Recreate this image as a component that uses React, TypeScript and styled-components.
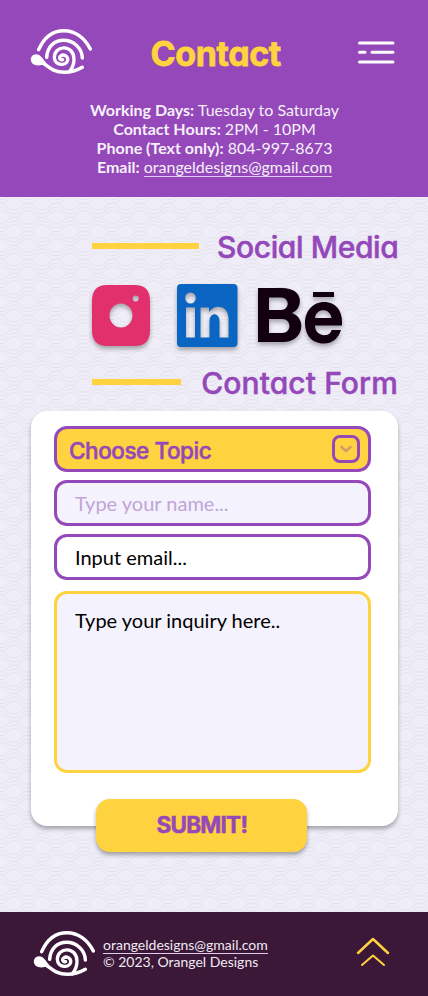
import React from "react";
import styled, { createGlobalStyle } from "styled-components";

const purple = "#9448b9";
const yellow = "#ffd23f";

const wave = (y: number, x: number) =>
  `<path d='M${x - 28} ${y} c4 0 5 -1 8 -4 s9 -4 12 0 s4 4 8 4 c4 0 5 -1 8 -4 s9 -4 12 0 s4 4 8 4 c4 0 5 -1 8 -4 s9 -4 12 0 s4 4 8 4'/>`;
const tile = `<svg xmlns='http://www.w3.org/2000/svg' width='28' height='28' viewBox='0 0 28 28'><g fill='none' stroke='#e4e1ec' stroke-width='1'>${[
  0, 3.7, 7.4, 14, 17.7, 21.4, 28, 31.7,
]
  .map((y, i) => wave(y, i % 6 > 2 ? -14 : 0))
  .join("")}</g></svg>`;
const texture = `url("data:image/svg+xml,${encodeURIComponent(tile)}")`;

const Global = createGlobalStyle`
  * { box-sizing: border-box; }
  body { margin: 0; font-family: Lato, sans-serif; }
`;

const Page = styled.div`
  width: 428px;
  height: 996px;
  display: flex;
  flex-direction: column;
  background: #efedf7 ${texture};
`;

const Header = styled.header`
  height: 197px;
  background: ${purple};
  color: #f6f0fb;
`;

const TopBar = styled.div`
  height: 100px;
  padding: 28px 33px 0 30px;
  display: flex;
  justify-content: space-between;
  align-items: flex-start;
`;

const Rounded = styled.span<{ $size: number; $spacing: number; $weight?: number; $stroke?: number }>`
  font-family: Inter, sans-serif;
  font-feature-settings: "cv11" 1, "ss03" 1;
  font-size: ${(p) => p.$size}px;
  line-height: 1.2;
  font-weight: ${(p) => p.$weight ?? 500};
  letter-spacing: ${(p) => p.$spacing}px;
  margin-right: ${(p) => p.$spacing}px;
  -webkit-text-stroke: ${(p) => p.$stroke ?? 0.5}px currentColor;
  stroke-linejoin: round;
  white-space: nowrap;
`;

const Title = styled.h1`
  margin: 6px 0 0 -19px;
  color: ${yellow};
  display: flex;
`;

const MenuButton = styled.button`
  margin: 12px 0 0;
  padding: 0;
  border: 0;
  background: none;
  display: flex;
`;

const Details = styled.div`
  text-align: center;
  font-size: 16px;
  line-height: 19px;
  padding-left: 1px;
`;

const MailLink = styled.a<{ $tight?: boolean }>`
  display: inline-block;
  height: ${(p) => (p.$tight ? 18 : 20)}px;
  color: inherit;
  text-decoration: none;
  border-bottom: 1px solid #e0cbeb;
`;

const Main = styled.main`
  flex: 1;
  padding: 30px 30px 0 31px;
`;

const SectionHead = styled.div`
  height: 40px;
  padding-left: 61px;
  display: flex;
  align-items: center;
  justify-content: space-between;
  color: ${purple};
`;

const Rule = styled.div<{ $width: number }>`
  width: ${(p) => p.$width}px;
  height: 6px;
  margin-bottom: 2px;
  background: ${yellow};
`;

const Socials = styled.div`
  height: 96px;
  padding: 16px 0 0 61px;
  display: flex;
  align-items: flex-start;
  svg { filter: drop-shadow(0 3px 2px rgba(0, 0, 0, 0.3)); overflow: visible; }
`;

const SocialLink = styled.a<{ $left?: number; $top?: number }>`
  display: flex;
  margin: ${(p) => p.$top ?? 0}px 0 0 ${(p) => p.$left ?? 0}px;
`;

const Card = styled.form`
  width: 367px;
  height: 415px;
  margin-top: 8px;
  padding: 15px 27px 0 23px;
  border-radius: 16px;
  background: #fff;
  box-shadow: 0 3px 4px rgba(0, 0, 0, 0.3);
  display: flex;
  flex-direction: column;
`;

const Select = styled.div`
  height: 46px;
  flex-shrink: 0;
  padding: 2px 8px 0 12px;
  border: 3px solid ${purple};
  border-radius: 13px;
  background: ${yellow};
  color: ${purple};
  display: flex;
  align-items: center;
  justify-content: space-between;
`;

const Chevron = styled.div`
  width: 28px;
  height: 28px;
  margin-top: -3px;
  border: 3px solid ${purple};
  border-radius: 8px;
  display: grid;
  place-items: center;
`;

const Field = styled.div<{ $muted?: boolean }>`
  height: 46px;
  flex-shrink: 0;
  margin-top: 8px;
  padding: 0 18px;
  border: 3px solid ${purple};
  border-radius: 13px;
  background: ${(p) => (p.$muted ? "#f4f2fd" : "#fff")};
  color: ${(p) => (p.$muted ? "#c2a4d6" : "#000")};
  font-size: 20px;
  line-height: 40px;
`;

const Inquiry = styled.div`
  height: 182px;
  flex-shrink: 0;
  margin-top: 11px;
  padding: 14px 18px;
  border: 3px solid ${yellow};
  border-radius: 13px;
  background: #f4f2fd;
  color: #000;
  font-size: 20px;
  line-height: 24px;
`;

const Submit = styled.button`
  width: 211px;
  height: 53px;
  flex-shrink: 0;
  margin: 26px 0 0 42px;
  padding: 0 0 3px;
  border: 0;
  border-radius: 14px;
  background: ${yellow};
  color: ${purple};
  box-shadow: 0 3px 4px rgba(0, 0, 0, 0.32);
`;

const Footer = styled.footer`
  height: 84px;
  padding: 18px 38px 0 33px;
  background: #3b1738;
  color: #f0eaf2;
  display: flex;
  align-items: flex-start;
`;

const Copyright = styled.div`
  flex: 1;
  margin: 6px 0 0 7px;
  font-size: 14px;
  line-height: 17px;
  display: flex;
  flex-direction: column;
  align-items: flex-start;
`;

const CopyLine = styled.span`
  margin-top: -1px;
`;

const TopLink = styled.a`
  display: flex;
  margin-top: 6px;
`;

function Snail() {
  return (
    <svg width="63" height="47" viewBox="30 24 189 141" fill="none" stroke="#fff" strokeWidth="10.5" strokeLinecap="round">
      <path d="M56 89C72 52 99 32 132 32S194 53 211 87" />
      <path d="M80 112C82 80 103 61 131 61S186 83 187 114" />
      <path d="M128 119C120 121 116 113 122 108C130 101 145 108 143 121C140 139 103 138 103 112C103 74 162 72 162 118C162 133 157 145 148 155" strokeWidth="10" />
      <path d="M58 123C80 131 92 157 133 157C160 157 175 149 187 142" />
      <path d="M48 103C62 103 68 117 80 131C70 133 62 137 50 136C26 133 28 104 48 103Z" fill="#fff" stroke="none" />
    </svg>
  );
}

export default function App() {
  return (
    <Page>
      <Global />
      <Header>
        <TopBar>
          <Snail />
          <Title>
            <Rounded $size={34} $spacing={-0.4} $weight={700} $stroke={0.8}>Contact</Rounded>
          </Title>
          <MenuButton aria-label="Menu">
            <svg width="38" height="25" fill="none" stroke="#fff" strokeWidth="3" strokeLinecap="round">
              <path d="M2.5 3H36M2.5 12.3H8M15 12.3H36M2.5 22H36" />
            </svg>
          </MenuButton>
        </TopBar>
        <Details>
          <div><b>Working Days:</b> Tuesday to Saturday</div>
          <div><b>Contact Hours:</b> 2PM - 10PM</div>
          <div><b>Phone (Text only):</b> 804-997-8673</div>
          <div><b>Email:</b> <MailLink>orangeldesigns@gmail.com</MailLink></div>
        </Details>
      </Header>
      <Main>
        <SectionHead>
          <Rule $width={107} />
          <Rounded $size={30} $spacing={-0.4}>Social Media</Rounded>
        </SectionHead>
        <Socials>
          <SocialLink $top={2} aria-label="Instagram">
            <svg width="58" height="61">
              <path fill="#e1306c" fillRule="evenodd" d="M15 0H43Q58 0 58 16V45Q58 61 43 61H15Q0 61 0 45V16Q0 0 15 0ZM29 18.5a11.5 12 0 1 0 0 24a11.5 12 0 1 0 0-24ZM43.7 10.5a3 3 0 1 0 0 6a3 3 0 1 0 0-6Z" />
            </svg>
          </SocialLink>
          <SocialLink $left={27} $top={1} aria-label="LinkedIn">
            <svg width="61" height="63">
              <path fill="#0a66c2" fillRule="evenodd" d="M4 0H56.5Q60.5 0 60.5 4V59Q60.5 63 56.5 63H4Q0 63 0 59V4Q0 0 4 0ZM13.5 8.5a5.3 5.5 0 1 0 0 11a5.3 5.5 0 1 0 0-11ZM9 23.5H18V53.5H9ZM23.5 23.5H32V28C38 19.500 51.500 21 51.500 35V53.500H42.500V37C42.500 28 32.500 28 32.500 37V53.500H23.500Z" />
            </svg>
          </SocialLink>
          <SocialLink $left={20} $top={5} aria-label="Behance">
            <svg width="86" height="56">
              <path fill="#13000f" fillRule="evenodd" d="M0 0H24C47 0 45 21 34 25C49 30 46 54 25 54H0ZM11 9.500V22H23C32 22 32 9.500 23 9.500ZM11 31V45H24C34 45 34 31 24 31ZM55 4H76V9H55ZM84 37.500H57C57 49 72 50 73.500 42H83C80 51 74 55.500 66 55.500C53 55.500 47 46 47 35C47 23 55 14 66 14C79 14 85 24 84 37.500ZM57 30H73.500C72 19.500 58 20 57 30Z" />
            </svg>
          </SocialLink>
        </Socials>
        <SectionHead>
          <Rule $width={89} />
          <Rounded $size={30} $spacing={0.1}>Contact Form</Rounded>
        </SectionHead>
        <Card>
          <Select>
            <Rounded $size={22.5} $spacing={-0.45}>Choose Topic</Rounded>
            <Chevron>
              <svg width="14" height="10" fill="none" stroke="#d49c67" strokeWidth="2.7" strokeLinecap="round" strokeLinejoin="round">
                <path d="M2.500 3L7 7L11.500 3" />
              </svg>
            </Chevron>
          </Select>
          <Field $muted>Type your name...</Field>
          <Field>Input email...</Field>
          <Inquiry>Type your inquiry here..</Inquiry>
          <Submit type="button">
            <Rounded $size={22.5} $spacing={-0.75} $weight={700}>SUBMIT!</Rounded>
          </Submit>
        </Card>
      </Main>
      <Footer>
        <Snail />
        <Copyright>
          <MailLink $tight>orangeldesigns@gmail.com</MailLink>
          <CopyLine>© 2023, Orangel Designs</CopyLine>
        </Copyright>
        <TopLink aria-label="Back to top">
          <svg width="34" height="31" fill="none" stroke={yellow} strokeLinecap="round" strokeLinejoin="round">
            <path strokeWidth="2.5" d="M2 17L17 3L32 17" />
            <path strokeWidth="2" d="M6 29L17 19.500L28 29" />
          </svg>
        </TopLink>
      </Footer>
    </Page>
  );
}
